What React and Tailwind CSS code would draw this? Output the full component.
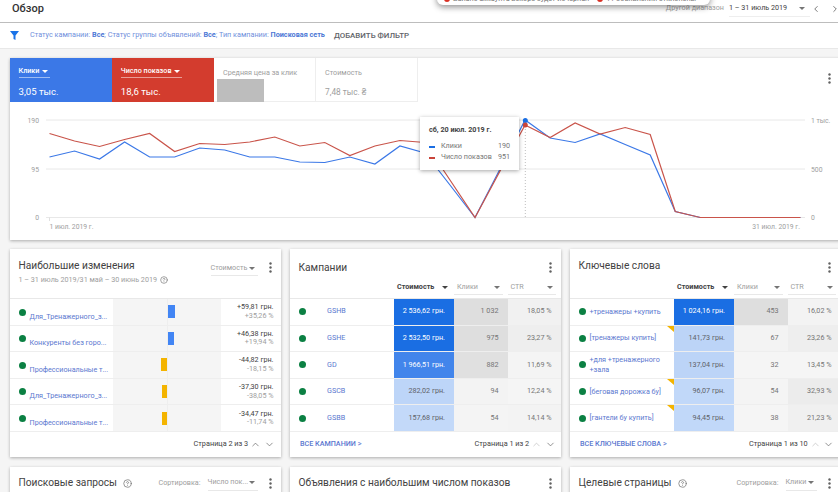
import { ChevronLeft, ChevronRight, ChevronUp, ChevronDown, CircleHelp } from 'lucide-react'

const blueLine = [157, 151, 159, 142, 157, 157, 148, 150, 157, 157, 162, 162.5, 157, 164, 146, 153, 185, 217.5, 169, 120, 138, 142.5, 134, 144.5, 155, 211.5, 217.5, 217.5, 217.5, 217.5, 217.5]
const redLine = [133.5, 141, 146.5, 139.5, 133.5, 151.5, 143.5, 144.5, 142, 137, 146, 142.5, 155.5, 146, 140.5, 142.5, 180, 217.5, 171, 125, 137.5, 123, 134, 127.5, 134.5, 211.5, 217.5, 217.5, 217.5, 217.5, 217.5]
const toPoints = (ys) => ys.map((y, i) => `${49.5 + i * 25.03},${y}`).join(' ')

const changes = [
  { name: 'Для_Тренажерного_з...', money: '+59,81 грн.', pct: '+35,26 %', up: true, w: 'w-[7.5px]' },
  { name: 'Конкуренты без горо...', money: '+46,38 грн.', pct: '+19,94 %', up: true, w: 'w-[6px]' },
  { name: 'Профессиональные т...', money: '-44,82 грн.', pct: '-18,15 %', up: false, w: 'w-[6px]' },
  { name: 'Для_Тренажерного_з...', money: '-37,30 грн.', pct: '-38,05 %', up: false, w: 'w-[5px]' },
  { name: 'Профессиональные т...', money: '-34,47 грн.', pct: '-11,74 %', up: false, w: 'w-[4.5px]' },
]

const campaigns = [
  { name: 'GSHB', cost: '2 536,62 грн.', clicks: '1 032', ctr: '18,05 %', costBg: 'bg-[#1a6ee3] text-white', clickBg: 'bg-[#dedede]', ctrBg: 'bg-[#f1f1f1]' },
  { name: 'GSHE', cost: '2 532,50 грн.', clicks: '975', ctr: '23,27 %', costBg: 'bg-[#1a6ee3] text-white', clickBg: 'bg-[#dedede]', ctrBg: 'bg-[#eeeeee]' },
  { name: 'GD', cost: '1 966,51 грн.', clicks: '882', ctr: '11,69 %', costBg: 'bg-[#4285eb] text-white', clickBg: 'bg-[#e0e0e0]', ctrBg: 'bg-[#f4f4f4]' },
  { name: 'GSCB', cost: '282,02 грн.', clicks: '94', ctr: '12,24 %', costBg: 'bg-[#bdd5f8] text-[#5f6368]', clickBg: 'bg-[#f3f3f3]', ctrBg: 'bg-[#f5f5f5]' },
  { name: 'GSBB', cost: '157,68 грн.', clicks: '54', ctr: '14,14 %', costBg: 'bg-[#c3d9f9] text-[#5f6368]', clickBg: 'bg-[#f4f4f4]', ctrBg: 'bg-[#f3f3f3]' },
]

const keywords = [
  { name: '+тренажеры +купить', cost: '1 024,16 грн.', clicks: '453', ctr: '16,02 %', costBg: 'bg-[#1a6ee3] text-white', clickBg: 'bg-[#dedede]', ctrBg: 'bg-[#f3f3f3]' },
  { name: '[тренажеры купить]', cost: '141,73 грн.', clicks: '67', ctr: '23,26 %', costBg: 'bg-[#bcd4f7] text-[#5f6368]', clickBg: 'bg-[#f3f3f3]', ctrBg: 'bg-[#eeeeee]', flag: true },
  { name: '+для +тренажерного +зала', cost: '137,04 грн.', clicks: '32', ctr: '13,45 %', costBg: 'bg-[#bcd4f7] text-[#5f6368]', clickBg: 'bg-[#f5f5f5]', ctrBg: 'bg-[#f5f5f5]' },
  { name: '[беговая дорожка бу]', cost: '96,07 грн.', clicks: '54', ctr: '32,93 %', costBg: 'bg-[#c1d8f9] text-[#5f6368]', clickBg: 'bg-[#f4f4f4]', ctrBg: 'bg-[#ececec]', flag: true },
  { name: '[гантели бу купить]', cost: '94,45 грн.', clicks: '38', ctr: '21,23 %', costBg: 'bg-[#c1d8f9] text-[#5f6368]', clickBg: 'bg-[#f5f5f5]', ctrBg: 'bg-[#f0f0f0]', flag: true },
]

function Caret({ className = 'text-[#757575]' }) {
  return (
    <svg width="6" height="3" viewBox="0 0 6 3" className={`shrink-0 ${className}`}>
      <path d="M0 0h6L3 3z" fill="currentColor" />
    </svg>
  )
}

function Dots({ className = '' }) {
  return (
    <svg width="3" height="11" viewBox="0 0 3 11" className={`shrink-0 text-[#616161] ${className}`}>
      <circle cx="1.5" cy="1.5" r="1.2" fill="currentColor" />
      <circle cx="1.5" cy="5.5" r="1.2" fill="currentColor" />
      <circle cx="1.5" cy="9.5" r="1.2" fill="currentColor" />
    </svg>
  )
}

function Dot() {
  return <span className="w-[7px] h-[7px] rounded-full bg-[#0b8043] shrink-0" />
}

function Card({ children, className = '' }) {
  return <div className={`bg-white shadow-[0_1px_3px_rgba(0,0,0,0.3)] ${className}`}>{children}</div>
}

function Pager({ label, dimUp }) {
  return (
    <div className="flex items-center text-[7.3px] text-[#424242]">
      <span>{label}</span>
      <ChevronUp size={11} strokeWidth={1.5} className={`ml-[2px] ${dimUp ? 'text-[#bdbdbd]' : 'text-[#616161]'}`} />
      <ChevronDown size={11} strokeWidth={1.5} className="ml-[2.3px] text-[#616161]" />
    </div>
  )
}

function ColumnHeads() {
  return (
    <div className="flex h-[22px] items-start pl-[104px] pt-[4px] text-[7.2px]">
      <div className="w-[60.5px] h-[15px] flex items-center justify-between pl-[3.5px] pr-[6px] font-bold text-[#424242]">
        Стоимость
        <Caret className="text-[#424242]" />
      </div>
      <div className="w-[53.5px] pr-[5px]">
        <div className="h-[15px] flex items-center justify-between pl-[3px] pr-[3px] border-b border-[#e8e8e8] text-[#9e9e9e]">
          Клики
          <Caret />
        </div>
      </div>
      <div className="w-[48px]">
        <div className="h-[15px] flex items-center justify-between pl-[3px] pr-[3px] border-b border-[#e8e8e8] text-[#9e9e9e]">
          CTR
          <Caret />
        </div>
      </div>
    </div>
  )
}

function MetricCells({ row }) {
  return (
    <>
      <div className={`w-[60.5px] flex items-center justify-end pr-[9px] ${row.costBg}`}>{row.cost}</div>
      <div className={`w-[53.5px] flex items-center justify-end pr-[9px] text-[#757575] ${row.clickBg}`}>{row.clicks}</div>
      <div className={`flex-1 flex items-center justify-end pr-[9px] text-[#757575] ${row.ctrBg}`}>{row.ctr}</div>
    </>
  )
}

function ChangesCard() {
  return (
    <Card className="h-[208px] flex flex-col">
      <div className="h-[49px] flex justify-between pl-[9px] pr-[9px] pt-[9px]">
        <div>
          <div className="text-[10.2px] leading-[16px] text-[#424242]">Наибольшие изменения</div>
          <div className="flex items-center gap-[3px] text-[7.2px] leading-[12px] text-[#9e9e9e]">
            1 – 31 июль 2019/31 май – 30 июнь 2019
            <CircleHelp size={8} className="text-[#757575]" />
          </div>
        </div>
        <div className="flex items-start pt-[3px]">
          <div className="w-[47px] h-[15px] flex items-center justify-between pr-[3px] border-b border-[#e8e8e8] text-[7.2px] text-[#9e9e9e]">
            Стоимость
            <Caret />
          </div>
          <Dots className="ml-[11px] mt-[1px]" />
        </div>
      </div>
      <div className="border-t border-[#e8e8e8]">
        {changes.map((c, i) => (
          <div key={i} className="flex h-[26.6px] border-b border-[#eeeeee] text-[7.2px]">
            <div className="w-[103.5px] flex items-start pl-[9px] pt-[9.5px]">
              <Dot />
              <span className="ml-[4px] mt-[2px] text-[#5b78cf] whitespace-nowrap leading-[12px]">{c.name}</span>
            </div>
            <div className="w-[107.5px] grid grid-cols-2 bg-[#f5f5f5]">
              <div className="flex justify-end items-center">
                {!c.up && <span className={`h-[13px] bg-[#f4b400] ${c.w}`} />}
              </div>
              <div className="flex justify-start items-center border-l border-[#eeeeee]">
                {c.up && <span className={`h-[13px] bg-[#4285f4] ${c.w}`} />}
              </div>
            </div>
            <div className="flex-1 flex flex-col items-end justify-center pr-[7px] leading-[8.5px]">
              <span className="text-[#424242]">{c.money}</span>
              <span className="text-[#9e9e9e]">{c.pct}</span>
            </div>
          </div>
        ))}
      </div>
      <div className="flex-1 flex items-center justify-end pr-[6px]">
        <Pager label="Страница 2 из 3" />
      </div>
    </Card>
  )
}

function CampaignsCard() {
  return (
    <Card className="h-[208px] flex flex-col">
      <div className="h-[27px] flex justify-between pl-[9px] pr-[9px] pt-[11px]">
        <div className="text-[10.2px] leading-[16px] text-[#424242]">Кампании</div>
        <Dots className="mt-[2px]" />
      </div>
      <ColumnHeads />
      <div className="border-t border-[#e8e8e8]">
        {campaigns.map((c) => (
          <div key={c.name} className="flex h-[26.6px] border-b border-[#eeeeee] text-[7.2px]">
            <div className="w-[104px] flex items-center pl-[9px]">
              <Dot />
              <span className="ml-[21.5px] text-[#5b78cf]">{c.name}</span>
            </div>
            <MetricCells row={c} />
          </div>
        ))}
      </div>
      <div className="flex-1 flex items-center justify-between pl-[10.5px] pr-[5px]">
        <span className="text-[7.2px] font-medium text-[#5b78cf]">ВСЕ КАМПАНИИ &gt;</span>
        <Pager label="Страница 1 из 2" dimUp />
      </div>
    </Card>
  )
}

function KeywordsCard() {
  return (
    <Card className="h-[208px] flex flex-col">
      <div className="h-[27px] flex justify-between pl-[9px] pr-[9px] pt-[9px]">
        <div className="text-[10.2px] leading-[16px] text-[#424242]">Ключевые слова</div>
        <Dots className="mt-[4px] mr-[1px]" />
      </div>
      <ColumnHeads />
      <div className="border-t border-[#e8e8e8]">
        {keywords.map((k) => (
          <div key={k.name} className="relative flex h-[26.6px] border-b border-[#eeeeee] text-[7.2px]">
            <div className="w-[104px] flex items-center pl-[9px] pr-[6px]">
              <Dot />
              <span className="ml-[4px] text-[#5b78cf] leading-[10px]">{k.name}</span>
            </div>
            <MetricCells row={k} />
            {k.flag && (
              <svg width="7" height="6" viewBox="0 0 7 6" className="absolute left-[97px] top-0">
                <path d="M0 0h7v6z" fill="#f4b400" />
              </svg>
            )}
          </div>
        ))}
      </div>
      <div className="flex-1 flex items-center justify-between pl-[10.5px] pr-[6.5px]">
        <span className="text-[7.2px] font-medium text-[#5b78cf]">ВСЕ КЛЮЧЕВЫЕ СЛОВА &gt;</span>
        <Pager label="Страница 1 из 10" dimUp />
      </div>
    </Card>
  )
}

function SummaryTab({ label, value, bg, underline }) {
  return (
    <div className={`w-[102.3px] h-[44px] pl-[9px] pt-[9px] text-white ${bg}`}>
      <div className={`flex items-center gap-[3px] h-[11px] pb-[1px] border-b border-white/50 text-[7.2px] font-medium ${underline}`}>
        {label}
        <Caret className="text-white" />
      </div>
      <div className="mt-[8px] text-[9.6px] leading-[12px]">{value}</div>
    </div>
  )
}

export default function App() {
  return (
    <div className="relative h-[492px] w-[838px] overflow-hidden bg-[#f5f5f5] font-['Roboto',sans-serif]">
      {/* Header */}
      <div className="h-[23px] bg-white border-b border-[#bdbdbd] flex items-start justify-between pl-[12px]">
        <div className="text-[11px] leading-[18px] font-medium text-[#333333]">Обзор</div>
        <div className="flex items-center h-[16px] text-[7.2px] mt-[0.5px]">
          <span className="text-[#9e9e9e]">Другой диапазон</span>
          <div className="ml-[5px] w-[81px] h-[16px] flex items-center justify-between pr-[5px] border-b border-[#eeeeee] text-[#424242]">
            1 – 31 июль 2019
            <Caret />
          </div>
          <ChevronLeft size={10} className="ml-[1px] text-[#616161]" />
          <ChevronRight size={10} className="ml-[9px] mr-[-2px] text-[#616161]" />
        </div>
      </div>

      {/* Filters */}
      <div className="h-[26px] bg-white border-b border-[#e8e8e8] flex items-center pl-[10px]">
        <svg width="9" height="9" viewBox="0 0 9 9" className="shrink-0">
          <path d="M0 0h9L5.5 4.5V9L3.5 8V4.5z" fill="#1a73e8" />
        </svg>
        <div className="ml-[11px] text-[7.25px] text-[#6f8fdc] whitespace-nowrap">
          Статус кампании: <b className="text-[#4d78d6]">Все</b>; Статус группы объявлений: <b className="text-[#4d78d6]">Все</b>; Тип кампании: <b className="text-[#4d78d6]">Поисковая сеть</b>
        </div>
        <div className="ml-[9px] text-[7.9px] font-medium text-[#5f6368] whitespace-nowrap">ДОБАВИТЬ ФИЛЬТР</div>
      </div>

      {/* Notification popup clipped by the top of the window */}
      <div className="absolute left-[437px] top-[-12px] w-[273px] h-[17px] bg-white rounded-b-[6px] shadow-[0_2px_6px_rgba(0,0,0,0.45)] flex items-end pl-[7px] pb-[3.5px] text-[7.2px] leading-[6px] text-[#757575] overflow-hidden whitespace-nowrap">
        <span className="w-[6px] h-[6px] rounded-full bg-[#d93025] mr-[3px]" />
        Баланс аккаунта вскоре будет исчерпан
        <span className="w-[6px] h-[6px] rounded-full bg-[#d93025] ml-[8px] mr-[3px]" />
        11 объявлений отклонены
      </div>

      <div className="pl-[9.5px] pt-[9px] w-[860px]">
        {/* Summary + chart */}
        <Card className="w-[832px] h-[182px]">
          <div className="flex h-[44px]">
            <SummaryTab label="Клики" value="3,05 тыс." bg="bg-[#3b78e7]" underline="w-[31px]" />
            <SummaryTab label="Число показов" value="18,6 тыс." bg="bg-[#d33c2e]" underline="w-[61px]" />
            <div className="w-[102px] h-[44px] border-r border-b border-[#eeeeee] pl-[3px]">
              <div className="pl-[6px] pt-[9px] h-[21px] text-[7.2px] leading-[11px] text-[#9e9e9e]">Средняя цена за клик</div>
              <div className="w-[47px] h-[23px] bg-[#bdbdbd]" />
            </div>
            <div className="w-[102px] h-[44px] border-r border-b border-[#eeeeee] pl-[9px] pt-[9px] text-[#9e9e9e]">
              <div className="text-[7.2px] leading-[11px]">Стоимость</div>
              <div className="mt-[8px] text-[8.3px] leading-[12px]">7,48 тыс. ₴</div>
            </div>
            <div className="flex-1 flex justify-end pt-[15px] pr-[11px]">
              <Dots />
            </div>
          </div>

          {/* Chart */}
          <div className="relative h-[138px] -ml-[9.5px] w-[838px]">
            <svg width="838" height="138" viewBox="0 102 838 138" className="block">
              {[120, 169, 217.5].map((y) => (
                <line key={y} x1="46" x2="805" y1={y} y2={y} stroke="#e8e8e8" strokeWidth="1" />
              ))}
              <line x1="49.5" x2="49.5" y1="217.5" y2="221" stroke="#e0e0e0" />
              <line x1="525.3" x2="525.3" y1="120" y2="217.5" stroke="#bdbdbd" strokeDasharray="1 2" />
              <polyline points={toPoints(blueLine)} fill="none" stroke="#3b78e7" strokeWidth="1.2" />
              <polyline points={toPoints(redLine)} fill="none" stroke="#c9544a" strokeWidth="1.2" />
              <circle cx="525.3" cy="120.5" r="2.5" fill="#1a6ee3" />
              <circle cx="525.3" cy="125" r="2.5" fill="#c9443a" />
              <g fontFamily="Roboto, sans-serif" fontSize="6.8" fill="#9e9e9e">
                <text x="39" y="122.5" textAnchor="end">190</text>
                <text x="39" y="171.5" textAnchor="end">95</text>
                <text x="39" y="220" textAnchor="end">0</text>
                <text x="811" y="122.5">1 тыс.</text>
                <text x="811" y="171.5">500</text>
                <text x="811" y="220">0</text>
                <text x="49.5" y="229">1 июл. 2019 г.</text>
                <text x="800" y="229" textAnchor="end">31 июл. 2019 г.</text>
              </g>
            </svg>

            {/* Tooltip */}
            <div className="absolute left-[420px] top-[15px] w-[99px] h-[53px] bg-white shadow-[0_1px_4px_rgba(0,0,0,0.35)] pl-[9px] pt-[8px] text-[7.2px]">
              <div className="font-bold text-[#424242] leading-[10px]">сб, 20 июл. 2019 г.</div>
              <div className="mt-[6px] flex items-center h-[11px] text-[#757575] whitespace-nowrap">
                <span className="w-[6px] h-[2px] bg-[#1a6ee3] mr-[6px]" />
                <span className="flex-1">Клики</span>
                <span className="mr-[9px]">190</span>
              </div>
              <div className="flex items-center h-[11px] text-[#757575] whitespace-nowrap">
                <span className="w-[6px] h-[2px] bg-[#c9443a] mr-[6px]" />
                <span className="flex-1">Число показов</span>
                <span className="mr-[9px]">951</span>
              </div>
            </div>
          </div>
        </Card>

        {/* Tiles */}
        <div className="mt-[9px] grid grid-cols-[271px_271px_271px] gap-x-[9px] gap-y-[10px]">
          <ChangesCard />
          <CampaignsCard />
          <KeywordsCard />

          <Card className="h-[60px] pl-[9px] pr-[9px] pt-[8px]">
            <div className="flex items-center">
              <span className="text-[10.2px] leading-[16px] text-[#424242]">Поисковые запросы</span>
              <CircleHelp size={9} className="ml-[6px] text-[#757575]" />
              <span className="ml-auto text-[7.2px] text-[#9e9e9e] whitespace-nowrap">Сортировка:</span>
              <div className="ml-[7px] w-[50px] h-[15px] flex items-center justify-between pr-[3px] border-b border-[#e8e8e8] text-[7.2px] text-[#9e9e9e] whitespace-nowrap">
                Число пок...
                <Caret />
              </div>
              <Dots className="ml-[11px]" />
            </div>
          </Card>
          <Card className="h-[60px] pl-[9px] pr-[9px] pt-[8px]">
            <div className="flex items-center justify-between">
              <span className="text-[10.2px] leading-[16px] text-[#424242]">Объявления с наибольшим числом показов</span>
              <Dots />
            </div>
          </Card>
          <Card className="h-[60px] pl-[9px] pr-[9px] pt-[8px]">
            <div className="flex items-center">
              <span className="text-[10.2px] leading-[16px] text-[#424242]">Целевые страницы</span>
              <CircleHelp size={9} className="ml-[6px] text-[#757575]" />
              <span className="ml-auto text-[7.2px] text-[#9e9e9e] whitespace-nowrap">Сортировка:</span>
              <div className="ml-[7px] w-[31px] h-[15px] flex items-center justify-between pr-[3px] border-b border-[#e8e8e8] text-[7.2px] text-[#9e9e9e]">
                Клики
                <Caret />
              </div>
              <Dots className="ml-[11px] mr-[1px]" />
            </div>
          </Card>
        </div>
      </div>
    </div>
  )
}
